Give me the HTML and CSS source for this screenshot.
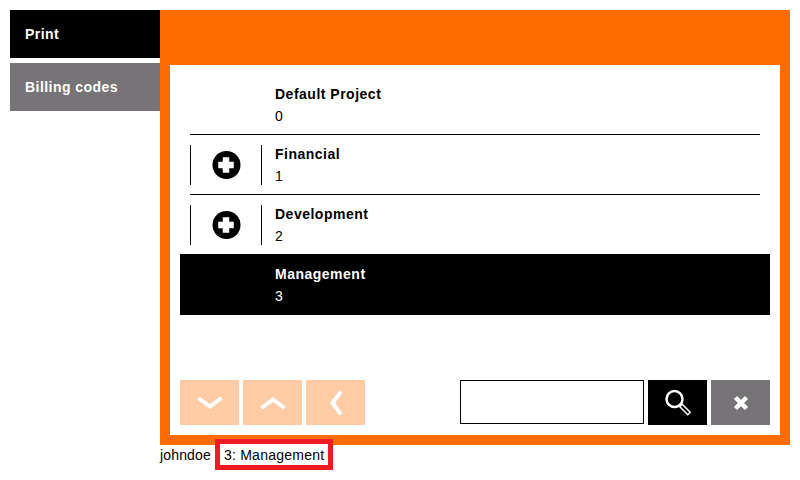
FILE: index.html
```html
<!DOCTYPE html>
<html lang="en">
  <head>
    <meta charset="UTF-8" />
    <title>Billing codes</title>
    <link rel="stylesheet" href="styles.css">
  </head>
  <body>
    <div class="main">
      <div class="tabs">
        <div class="tab tab-active">Print</div>
        <div class="tab tab-other">Billing codes</div>
      </div>
      <div class="panel">
        <div class="content">
          <div class="list">
            <div class="row">
              <div class="expander"></div>
              <div class="label"><b>Default Project</b><span>0</span></div>
            </div>
            <div class="row">
              <div class="expander has-children">
                <svg width="30" height="30" viewBox="0 0 30 30">
                  <circle cx="15.500" cy="15" r="14" fill="#000" />
                  <path d="M15 10.500v9M10.500 15h9" fill="none" stroke="#fff" stroke-width="6.500" stroke-linecap="square" stroke-linejoin="round" />
                </svg>
              </div>
              <div class="label"><b>Financial</b><span>1</span></div>
            </div>
            <div class="row">
              <div class="expander has-children">
                <svg width="30" height="30" viewBox="0 0 30 30">
                  <circle cx="15.500" cy="15" r="14" fill="#000" />
                  <path d="M15 10.500v9M10.500 15h9" fill="none" stroke="#fff" stroke-width="6.500" stroke-linecap="square" stroke-linejoin="round" />
                </svg>
              </div>
              <div class="label"><b>Development</b><span>2</span></div>
            </div>
            <div class="row row-selected">
              <div class="expander"></div>
              <div class="label"><b>Management</b><span>3</span></div>
            </div>
          </div>
          <div class="toolbar">
            <div class="btn btn-disabled">
              <svg width="26" height="14" viewBox="0 0 26 14"><path d="M1.500 2l11.500 8.500L24.500 2" fill="none" stroke="#fff" stroke-width="4" /></svg>
            </div>
            <div class="btn btn-disabled">
              <svg width="26" height="14" viewBox="0 0 26 14"><path d="M1.500 12L13 3.500 24.500 12" fill="none" stroke="#fff" stroke-width="4" /></svg>
            </div>
            <div class="btn btn-disabled">
              <svg width="14" height="26" viewBox="0 0 14 26"><path d="M12 1.500L3.500 13 12 24.500" fill="none" stroke="#fff" stroke-width="4" /></svg>
            </div>
            <input class="search" type="text" />
            <div class="btn btn-search">
              <svg width="28" height="28" viewBox="0 0 28 28" fill="none" stroke="#fff">
                <circle cx="10.500" cy="10" r="8" stroke-width="2.500" />
                <path d="M16.500 16l9 9" stroke-width="5" />
                <path d="M17.500 17l7 7" stroke="#000" stroke-width="2" />
              </svg>
            </div>
            <div class="btn btn-clear">
              <svg width="16" height="16" viewBox="0 0 16 16"><path d="M2.500 2.500l11 11M13.500 2.500l-11 11" fill="none" stroke="#fff" stroke-width="4.500" /></svg>
            </div>
          </div>
        </div>
      </div>
    </div>
    <div class="status">
      <span class="user">johndoe</span>
      <span class="current">3: Management</span>
    </div>
  </body>
</html>
```

FILE: styles.css
```css
* {
  box-sizing: border-box;
}
body {
  margin: 10px;
  font-family: "Liberation Sans", Arial, sans-serif;
  font-size: 14px;
  color: #000;
  background-color: #fff;
}
.main {
  display: flex;
  height: 435px;
}
.tabs {
  width: 150px;
  display: flex;
  flex-direction: column;
  gap: 5px;
}
.tab {
  height: 48px;
  padding: 0 15px;
  display: flex;
  align-items: center;
  color: #fff;
  font-weight: bold;
  letter-spacing: 0.45px;
}
.tab-active {
  background-color: #000;
}
.tab-other {
  background-color: #767476;
}
.panel {
  width: 630px;
  padding: 55px 10px 10px;
  background-color: #ff6c00;
}
.content {
  height: 100%;
  padding: 10px;
  background-color: #fff;
  display: flex;
  flex-direction: column;
  justify-content: space-between;
}
.row {
  height: 60px;
  margin: 0 10px;
  display: flex;
  align-items: center;
  border-bottom: 1px solid #000;
}
.row:nth-child(3) {
  border-bottom: 0;
}
.row-selected {
  height: 61px;
  margin: -1px 0 0;
  padding: 1px 10px 0;
  border-bottom: 0;
  background-color: #000;
  color: #fff;
}
.expander {
  width: 72px;
  height: 40px;
  display: flex;
  align-items: center;
  justify-content: center;
}
.has-children {
  border-left: 1px solid #000;
  border-right: 1px solid #000;
}
.label {
  padding-left: 13px;
  display: flex;
  flex-direction: column;
  gap: 6px;
}
.label b {
  letter-spacing: 0.5px;
}
.toolbar {
  display: flex;
  gap: 4px;
}
.btn {
  flex: none;
  width: 59px;
  height: 45px;
  display: flex;
  align-items: center;
  justify-content: center;
}
.btn-disabled {
  background-color: #ffcca6;
}
.btn-search {
  background-color: #000;
}
.btn-clear {
  background-color: #767476;
}
.search {
  flex: none;
  width: 184px;
  height: 44px;
  margin: 0 0 0 91px;
  padding: 0 4px;
  border: 1px solid #000;
  border-radius: 0;
  outline: 0;
}
.status {
  display: flex;
  align-items: center;
  margin: -6px 0 0 150px;
  position: relative;
}
.user {
  margin-right: 4px;
  letter-spacing: 0.15px;
}
.current {
  height: 31px;
  padding: 0 4px;
  display: flex;
  align-items: center;
  border: 5px solid #ed1c24;
  background-color: #fff;
  letter-spacing: 0.25px;
}
```
